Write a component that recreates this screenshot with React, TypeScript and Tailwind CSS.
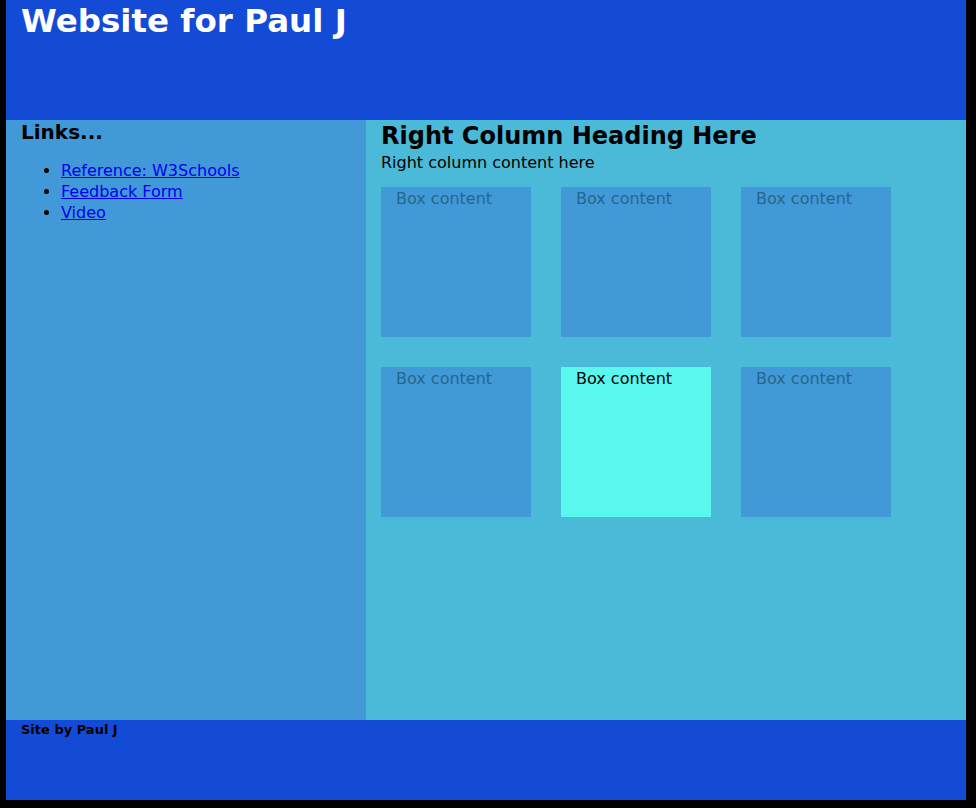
export default function App() {
  const boxes = [0, 1, 2, 3, 4, 5];
  return (
    <div className="min-h-[808px] bg-black font-['DejaVu_Sans',Verdana,sans-serif]">
      <div className="ml-[6px] w-[960px]">
        <header className="h-[120px] bg-[#144bd6] px-[15px]">
          <h1 className="text-[32.5px] font-bold leading-[42px] text-white">Website for Paul J</h1>
        </header>

        <div className="flex h-[600px]">
          <aside className="w-[360px] bg-[#4299d8] px-[15px]">
            <h3 className="text-[20px] font-bold leading-[24px] text-black">Links...</h3>
            <ul className="mt-[16px] list-disc pl-[40px] text-[16px] leading-[21px]">
              <li>
                <a href="#" className="text-[#0000ee] underline">Reference: W3Schools</a>
              </li>
              <li>
                <a href="#" className="text-[#0000ee] underline">Feedback Form</a>
              </li>
              <li>
                <a href="#" className="text-[#0000ee] underline">Video</a>
              </li>
            </ul>
          </aside>

          <main className="w-[600px] bg-[#4bbad8] px-[15px]">
            <h2 className="text-[24px] font-bold leading-[32px] text-black">Right Column Heading Here</h2>
            <p className="text-[16px] leading-[21px] text-black">Right column content here</p>
            <div className="mt-[14px] flex w-[540px] flex-wrap gap-[30px]">
              {boxes.map((i) => (
                <div
                  key={i}
                  className={
                    i === 4
                      ? "h-[150px] w-[150px] bg-[#5af7ef] px-[15px] pt-[1px] text-[16px] leading-[22px] text-black"
                      : "h-[150px] w-[150px] bg-[#4299d8] px-[15px] pt-[1px] text-[16px] leading-[22px] text-[#25678a]"
                  }
                >
                  Box content
                </div>
              ))}
            </div>
          </main>
        </div>

        <footer className="h-[80px] bg-[#144bd6] px-[15px]">
          <p className="text-[13px] font-bold leading-[20px] text-black">Site by Paul J</p>
        </footer>
      </div>
    </div>
  );
}
